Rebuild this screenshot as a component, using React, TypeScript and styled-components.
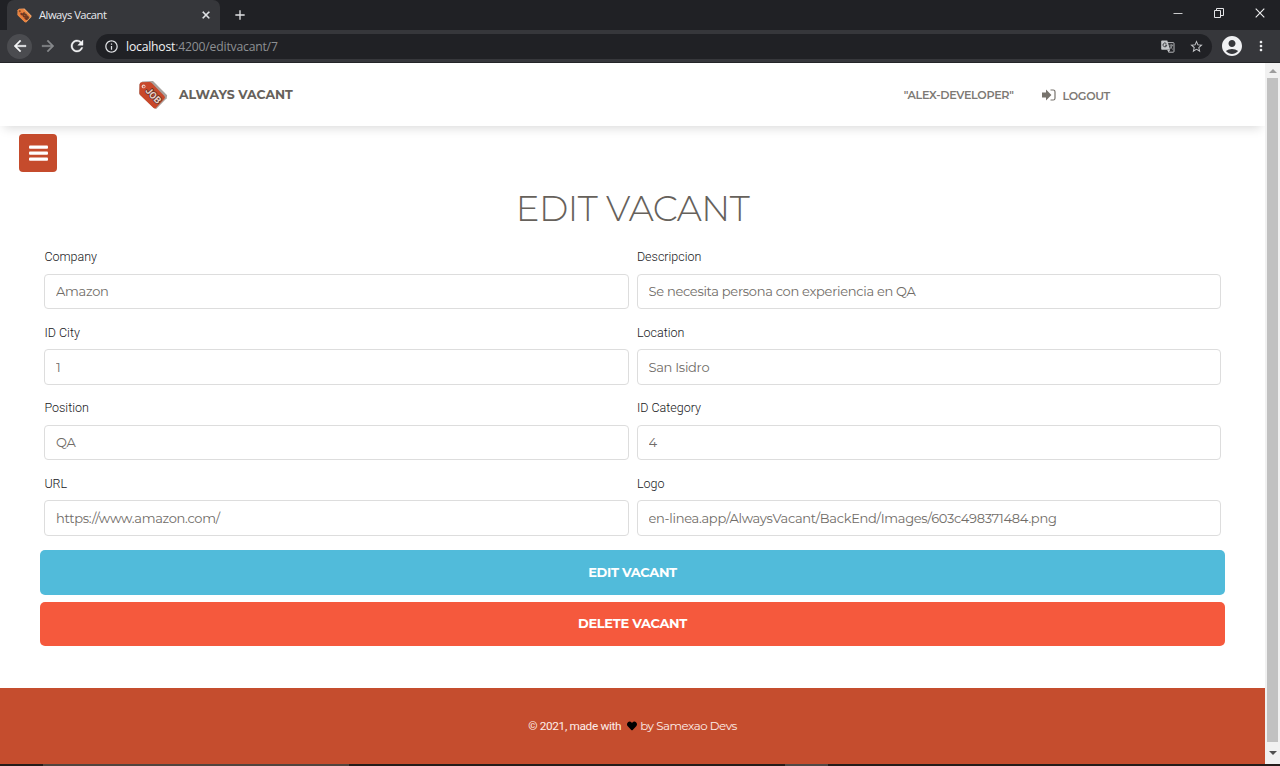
import React from "react";
import styled, { createGlobalStyle } from "styled-components";
import { MdArrowBack, MdArrowForward, MdRefresh, MdInfoOutline, MdStarBorder, MdAccountCircle, MdMoreVert, MdClose, MdAdd } from "react-icons/md";
import { FaHeart } from "react-icons/fa";

const Global = createGlobalStyle`
  * { box-sizing: border-box; }
  html, body { margin: 0; height: 100%; overflow: hidden; background: #fff; }
  body { font-family: Roboto, "Open Sans", sans-serif; }
`;

const display = `Montserrat, Inter, "Open Sans", sans-serif`;

const Window = styled.div`
  width: 1280px;
  height: 766px;
  display: flex;
  flex-direction: column;
  overflow: hidden;
`;
const TabStrip = styled.div`
  height: 30px;
  flex: none;
  background: #202125;
  display: flex;
  align-items: stretch;
  padding-left: 7px;
`;
const Tab = styled.div`
  width: 213px;
  background: #36373b;
  border-radius: 7px 7px 0 0;
  display: flex;
  align-items: center;
  padding: 0 8px 0 10px;
  color: #e8eaed;
`;
const TabTitle = styled.span`
  font: 400 11.2px "Open Sans", sans-serif;
  letter-spacing: -0.5px;
  margin-left: 7px;
  margin-top: -1px;
  flex: 1;
  white-space: nowrap;
`;
const CloseIcon = styled(MdClose)`
  path:not([fill="none"]) { stroke: currentColor; stroke-width: 1.2px; }
`;
const NewTab = styled.div`
  display: flex;
  align-items: center;
  padding-left: 12px;
  color: #e0e1e3;
  flex: 1;
`;
const WindowControls = styled.div`
  display: flex;
  align-items: center;
  gap: 31px;
  padding: 0 15px 4px 0;
`;
const Toolbar = styled.div`
  height: 33px;
  flex: none;
  background: #36373b;
  border-bottom: 1px solid #242528;
  display: flex;
  align-items: center;
  padding: 0 11px 0 7px;
`;
const NavButton = styled.div<{ $active?: boolean; $dim?: boolean }>`
  width: 25px;
  height: 25px;
  border-radius: 50%;
  display: flex;
  align-items: center;
  justify-content: center;
  margin-right: 3.5px;
  background: ${(p) => (p.$active ? "#4b4c50" : "transparent")};
  color: ${(p) => (p.$dim ? "#86888b" : "#f4f5f6")};
  path:not([fill="none"]) { stroke: currentColor; stroke-width: 0.5px; }
`;
const AddressBar = styled.div`
  flex: 1;
  height: 25px;
  border-radius: 13px;
  background: #202125;
  display: flex;
  align-items: center;
  padding: 0 8px 0 8px;
  margin-left: 3.5px;
  color: #dfe1e4;
`;
const Url = styled.span`
  flex: 1;
  margin-left: 7px;
  font: 400 12.2px "Open Sans", sans-serif;
  letter-spacing: -0.2px;
  color: #8d9093;
  b { font-weight: 400; color: #f1f2f4; }
`;
const BarIcons = styled.div`
  display: flex;
  align-items: center;
  gap: 14px;
  color: #c4c6c9;
`;
const ToolbarEnd = styled.div`
  display: flex;
  align-items: center;
  margin-left: 8px;
  gap: 9px;
  color: #f0f1f3;
`;
const Viewport = styled.div`
  height: 701px;
  flex: none;
  display: flex;
`;
const Page = styled.main`
  width: 1265px;
  background: #fff;
  display: flex;
  flex-direction: column;
`;
const Header = styled.header`
  height: 63px;
  flex: none;
  background: #fff;
  box-shadow: 0 6px 10px -4px rgba(0, 0, 0, 0.15);
  display: flex;
  align-items: center;
  padding: 0 155px 0 138px;
  font-family: ${display};
`;
const Brand = styled.div`
  display: flex;
  align-items: center;
  gap: 11px;
  flex: 1;
  font-size: 12.5px;
  font-weight: 700;
  color: #66615b;
`;
const NavItem = styled.div`
  display: flex;
  align-items: center;
  gap: 6px;
  margin-left: 29px;
  font-size: 11.2px;
  font-weight: 600;
  letter-spacing: -0.32px;
  color: #7d7974;
`;
const NavText = styled.span`
  padding-top: 2px;
`;
const MenuButton = styled.button`
  width: 38px;
  height: 38px;
  margin: 8px 0 0 19px;
  padding: 0;
  flex: none;
  border: 0;
  border-radius: 4px;
  background: #c54b2c;
  color: #fff;
  display: flex;
  align-items: center;
  justify-content: center;
`;
const Title = styled.h1`
  margin: 14px 0 0;
  height: 46px;
  line-height: 46px;
  text-align: center;
  font-family: ${display};
  font-size: 35.5px;
  font-weight: 300;
  letter-spacing: -0.48px;
  color: #66615b;
`;
const Form = styled.form`
  padding: 16px 40px 0;
  flex: 1;
  display: flex;
  flex-direction: column;
`;
const Fields = styled.div`
  display: grid;
  grid-template-columns: 1fr 1fr;
  column-gap: 8px;
  padding: 0 4px;
  grid-auto-rows: 75.5px;
`;
const Field = styled.label`
  display: flex;
  flex-direction: column;
`;
const FieldLabel = styled.span`
  height: 18px;
  line-height: 18px;
  font-size: 12.5px;
  font-weight: 300;
  color: #17171b;
  margin-bottom: 7.5px;
  padding-left: 0.4px;
`;
const Input = styled.input`
  height: 35.5px;
  width: 100%;
  border: 1px solid #dddddd;
  border-radius: 4px;
  background: #fff;
  padding: 0 11px;
  outline: none;
  font-family: ${display};
  font-size: 13px;
  font-weight: 400;
  letter-spacing: -0.29px;
  color: #706c67;
`;
const Action = styled.button<{ $tone: string }>`
  height: 44.5px;
  flex: none;
  margin-bottom: 7px;
  padding: 0 0 1px;
  border: 0;
  border-radius: 5px;
  background: ${(p) => p.$tone};
  color: #fff;
  font-family: ${display};
  font-size: 13px;
  letter-spacing: -0.33px;
  font-weight: 700;
`;
const Footer = styled.footer`
  height: 76px;
  flex: none;
  background: #c54d2e;
  display: flex;
  align-items: center;
  justify-content: center;
  color: #fdeee9;
  font-size: 11.8px;
  letter-spacing: -0.33px;
`;
const Heart = styled(FaHeart)`
  color: #000;
  margin: 0 3px 0 6px;
`;
const Author = styled.span`
  font-family: ${display};
  font-weight: 400;
  font-size: 11.8px;
  letter-spacing: -0.46px;
`;
const Scrollbar = styled.div`
  width: 15px;
  background: #f1f1f1;
  display: flex;
  flex-direction: column;
  align-items: center;
`;
const Thumb = styled.div`
  width: 11px;
  flex: 1;
  background: #c1c1c1;
`;
const ScrollArrow = styled.div<{ $h: number }>`
  height: ${(p) => p.$h}px;
  display: flex;
  align-items: center;
`;
const Taskbar = styled.div`
  height: 2px;
  flex: none;
  display: flex;
  background: #241c1a;
`;
const TaskSegment = styled.div<{ $w: number; $tone: string }>`
  width: ${(p) => p.$w}px;
  background: ${(p) => p.$tone};
`;

const TagLogo = ({ size, body, edge, ink }: { size: number; body: string; edge: string; ink: string }) => (
  <svg width={size} height={size} viewBox="0 0 28 28">
    <path d="M4 1.5 14 1 27.2 14.3 26.8 17 17 27 14.5 26 1 13 1.3 4Z" fill={edge} />
    <path d="M3.5 2.2 10.4 1.8Q11.8 1.8 12.8 2.8L24.6 15Q25.8 16.3 24.6 17.6L16.7 26.1Q15.6 27.2 14.3 26L2.2 14.3Q1.2 13.2 1.3 12L1.5 4Q1.6 2.4 3.5 2.2Z" fill={body} />
    <circle cx="5.2" cy="6" r="1.8" fill={ink} />
    <circle cx="5.5" cy="6.2" r=".8" fill={body} />
    <text x="14.3" y="17.6" transform="rotate(46 14.3 14.5)" textAnchor="middle" fontFamily="Roboto, sans-serif" fontWeight="700" fontSize="9" stroke="#5b3028" strokeWidth="1.4" paintOrder="stroke" fill={ink}>JOB</text>
  </svg>
);

const TranslateIcon = () => (
  <svg width="14" height="13" viewBox="0 0 14 13">
    <path d="M5 2.6h7.2q.8 0 .8.8v8q0 .8-.8.8H7.6" fill="none" stroke="#b4b6b9" />
    <path d="M1 .5h5.3l2.9 9.2H1q-.8 0-.8-.8V1.3Q.2.5 1 .5Z" fill="#c4c6c9" />
    <path d="M6.2 9.9h2.9L7.6 12.5Z" fill="#c4c6c9" />
    <path d="M5.4 3.7A1.9 1.9 0 1 0 5.8 5.2H4" fill="none" stroke="#303136" strokeWidth=".9" />
    <path d="M8.4 5.2h3.8M10.2 4.2v1M11.3 5.3Q10.6 7.6 9 8.6M9.4 6.4Q10 8 11.8 9.4" fill="none" stroke="#b4b6b9" strokeWidth=".8" />
  </svg>
);

const fields = [
  ["Company", "Amazon"],
  ["Descripcion", "Se necesita persona con experiencia en QA"],
  ["ID City", "1"],
  ["Location", "San Isidro"],
  ["Position", "QA"],
  ["ID Category", "4"],
  ["URL", "https://www.amazon.com/"],
  ["Logo", "en-linea.app/AlwaysVacant/BackEnd/Images/603c498371484.png"],
];

export default function App() {
  return (
    <Window>
      <Global />
      <TabStrip>
        <Tab>
          <TagLogo size={15} body="#e8823f" edge="#f3a469" ink="#7a3c1c" />
          <TabTitle>Always Vacant</TabTitle>
          <CloseIcon size={12} />
        </Tab>
        <NewTab><MdAdd size={16} /></NewTab>
        <WindowControls>
          <svg width="10" height="10" viewBox="0 0 10 10"><path d="M.5 5.5h9" stroke="#c9cacc" /></svg>
          <svg width="10" height="10" viewBox="0 0 10 10" fill="none" stroke="#e4e5e7"><path d="M.5 2.5h6v7h-6zM2.5 2.5v-2h7v7h-3" /></svg>
          <svg width="10" height="10" viewBox="0 0 10 10"><path d="M.7.7l8.6 8.6M9.3.7.7 9.3" stroke="#f0f1f2" strokeWidth="1.1" /></svg>
        </WindowControls>
      </TabStrip>
      <Toolbar>
        <NavButton $active><MdArrowBack size={18} /></NavButton>
        <NavButton $dim><MdArrowForward size={18} /></NavButton>
        <NavButton><MdRefresh size={18} /></NavButton>
        <AddressBar>
          <MdInfoOutline size={15} />
          <Url><b>localhost</b>:4200/editvacant/7</Url>
          <BarIcons><TranslateIcon /><MdStarBorder size={15} /></BarIcons>
        </AddressBar>
        <ToolbarEnd><MdAccountCircle size={24} /><MdMoreVert size={16} /></ToolbarEnd>
      </Toolbar>
      <Viewport>
        <Page>
          <Header>
            <Brand>
              <TagLogo size={30} body="#c8482a" edge="#a9a19d" ink="#ecd0c6" />
              ALWAYS VACANT
            </Brand>
            <NavItem>"ALEX-DEVELOPER"</NavItem>
            <NavItem>
              <svg width="14" height="12" viewBox="0 0 14 12">
                <path d="M0 3.4h4V.5L9.4 6 4 11.5V8.6H0z" fill="#77736d" />
                <path d="M8.5 1h2.7q1.8 0 1.8 1.8v6.4q0 1.8-1.8 1.8H8.5" fill="none" stroke="#77736d" strokeWidth="1.2" />
              </svg>
              <NavText>LOGOUT</NavText>
            </NavItem>
          </Header>
          <MenuButton type="button">
            <svg width="19" height="16" viewBox="0 0 19 16" fill="currentColor">
              <rect y=".5" width="19" height="3.2" rx="1" />
              <rect y="6.5" width="19" height="3.2" rx="1" />
              <rect y="12.5" width="19" height="3.2" rx="1" />
            </svg>
          </MenuButton>
          <Title>EDIT VACANT</Title>
          <Form>
            <Fields>
              {fields.map(([name, value]) => (
                <Field key={name}>
                  <FieldLabel>{name}</FieldLabel>
                  <Input defaultValue={value} />
                </Field>
              ))}
            </Fields>
            <Action type="button" $tone="#51bbda">EDIT VACANT</Action>
            <Action type="button" $tone="#f5593d">DELETE VACANT</Action>
          </Form>
          <Footer>
            © 2021, made with <Heart size={10} /> <Author>by Samexao Devs</Author>
          </Footer>
        </Page>
        <Scrollbar>
          <ScrollArrow $h={15}><svg width="8" height="4"><path d="M0 4 4 0l4 4z" fill="#9d9d9d" /></svg></ScrollArrow>
          <Thumb />
          <ScrollArrow $h={22}><svg width="8" height="4"><path d="M0 0h8L4 4z" fill="#505050" /></svg></ScrollArrow>
        </Scrollbar>
      </Viewport>
      <Taskbar>
        <TaskSegment $w={43} $tone="#241c1a" />
        <TaskSegment $w={306} $tone="#51443f" />
        <TaskSegment $w={436} $tone="#241c1a" />
        <TaskSegment $w={43} $tone="#504846" />
      </Taskbar>
    </Window>
  );
}
